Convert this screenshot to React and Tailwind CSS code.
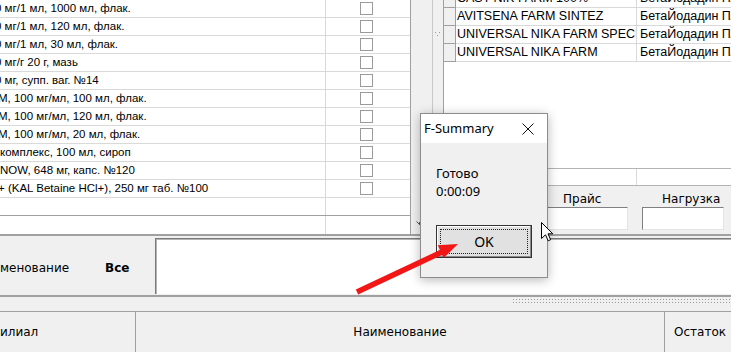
const leftRows = [
  { t: "0 мг/1 мл, 1000 мл, флак.", ml: "-ml-[5px]" },
  { t: "0 мг/1 мл, 120 мл, флак.", ml: "-ml-[5px]" },
  { t: "0 мг/1 мл, 30 мл, флак.", ml: "-ml-[5px]" },
  { t: "0 мг/г 20 г, мазь", ml: "-ml-[5px]" },
  { t: "0 мг, супп. ваг. №14", ml: "-ml-[5px]" },
  { t: "М, 100 мг/мл, 100 мл, флак.", ml: "-ml-[2px]" },
  { t: "М, 100 мг/мл, 120 мл, флак.", ml: "-ml-[2px]" },
  { t: "М, 100 мг/мл, 20 мл, флак.", ml: "-ml-[2px]" },
  { t: "комплекс, 100 мл, сироп", ml: "ml-0" },
  { t: "NOW, 648 мг, капс. №120", ml: "ml-0" },
  { t: "+ (KAL Betaine HCl+), 250 мг таб. №100", ml: "-ml-[2px]" },
];

const rightRows = [
  ["CAST NIK FARM 100%", "БетаЙодадин Плюс"],
  ["AVITSENA FARM SINTEZ", "БетаЙодадин Плюс"],
  ["UNIVERSAL NIKA FARM SPECIAL", "БетаЙодадин Плюс"],
  ["UNIVERSAL NIKA FARM", "БетаЙодадин Плюс"],
];

const sans = "font-['Liberation_Sans',Arial,sans-serif]";
const deja = "font-['DejaVu_Sans',sans-serif]";

function Checkbox() {
  return <span className="block w-[13px] h-[13px] border border-[#9a9a9a] bg-white" />;
}

function LeftGrid() {
  return (
    <div className={`w-[411px] shrink-0 flex flex-col bg-white border-r border-[#a0a0a0] text-[11.5px] ${sans}`}>
      {leftRows.map((r, i) => (
        <div key={i} className="flex h-[18px] border-b border-[#d9d9d9]">
          <div className="w-[326px] shrink-0 border-r border-[#d9d9d9] overflow-hidden flex items-center whitespace-nowrap">
            <span className={r.ml}>{r.t}</span>
          </div>
          <div className="flex-1 flex items-center pl-[34px]">
            <Checkbox />
          </div>
        </div>
      ))}
      <div className="flex h-[18px] border-b border-[#a0a0a0]">
        <div className="w-[326px] border-r border-[#d9d9d9]" />
      </div>
      <div className="flex flex-1">
        <div className="w-[326px] border-r border-[#d9d9d9]" />
      </div>
    </div>
  );
}

function Splitter() {
  return (
    <div className="flex shrink-0">
      <div className="w-[22px] border-r border-[#c8c8c8] flex flex-col">
        <svg className="mt-auto mb-[8px] ml-[5px]" width="5" height="5" viewBox="0 0 5 5">
          <path d="M0.5 0.5 L3.5 3.5 M3.5 1 L3.5 4" stroke="#555" strokeWidth="1" />
        </svg>
      </div>
      <div className="w-[10px] pt-[31px] pl-[1px]">
        <svg width="8" height="6" viewBox="0 0 8 6">
          <rect x="1" y="1" width="1" height="1" fill="#9a9a9a" />
          <rect x="5" y="1" width="1" height="1" fill="#9a9a9a" />
          <rect x="3" y="4" width="1" height="1" fill="#9a9a9a" />
        </svg>
      </div>
    </div>
  );
}

function RightPanel() {
  return (
    <div className="flex-1 min-w-0 flex flex-col border-l border-[#a0a0a0]">
      <div className="h-[186px] bg-white flex flex-col">
        <div className="h-[62px] overflow-hidden">
          <div className={`-mt-[10px] text-[12.5px] text-black ${sans}`}>
            {rightRows.map((r, i) => (
              <div key={i} className="flex h-[18px]">
                <div className="w-[12px] shrink-0 bg-[#f0f0f0] border-r border-b border-[#a0a0a0]" />
                <div className="w-[181px] shrink-0 border-r border-b border-[#d9d9d9] overflow-hidden whitespace-nowrap pl-[1px] leading-[17px]">
                  {r[0]}
                </div>
                <div className="flex-1 min-w-0 border-b border-[#d9d9d9] overflow-hidden whitespace-nowrap pl-[3px] leading-[17px]">
                  {r[1]}
                </div>
              </div>
            ))}
          </div>
        </div>
        <div className="flex-1" />
        <div className="flex h-[18px] border-t border-b border-[#b4b4b4]">
          <div className="w-[193px] border-r border-[#d9d9d9]" />
        </div>
      </div>
      <div className={`flex-1 bg-[#f0f0f0] flex pt-[6px] text-[12px] text-black ${deja}`}>
        <div className="ml-[103px] w-[81px] shrink-0 flex flex-col">
          <div className="h-[15px] leading-[15px] pl-[16px]">Прайс</div>
          <div className="h-[23px] bg-white border border-t-[#808080] border-l-[#808080] border-r-[#e3e3e3] border-b-[#e3e3e3]" />
        </div>
        <div className="ml-[14px] w-[82px] shrink-0 flex flex-col">
          <div className="h-[15px] leading-[15px] pl-[20px] whitespace-nowrap">Нагрузка</div>
          <div className="h-[23px] bg-white border border-t-[#808080] border-l-[#808080] border-r-[#e3e3e3] border-b-[#e3e3e3]" />
        </div>
      </div>
    </div>
  );
}

function Dialog() {
  return (
    <div className="absolute left-[420px] top-[113px] w-[128px] h-[165px] border border-[#8c8c8c] bg-[#f0f0f0] shadow-[0_2px_10px_rgba(0,0,0,0.28)] font-['Noto_Sans',sans-serif] text-[13px] text-black flex flex-col">
      <div className="h-[29px] bg-white flex items-center pl-[3px]">
        <span>F-Summary</span>
        <svg className="ml-auto mr-[13px]" width="12" height="12" viewBox="0 0 12 12">
          <path d="M0.5 0.5 L11.5 11.5 M11.5 0.5 L0.5 11.5" stroke="#111" strokeWidth="1" />
        </svg>
      </div>
      <div className="pl-[15px] mt-[21px] leading-[18px]">
        <div>Готово</div>
        <div>0:00:09</div>
      </div>
      <div className="pl-[15px] mt-[25px]">
        <div className="w-[96px] h-[33px] border border-[#333] bg-[#e1e1e1] p-[3px] shadow-[inset_-1px_-1px_0_#8a8a8a,inset_1px_1px_0_#fff]">
          <div className="h-full border border-dotted border-[#222] flex items-center justify-center text-[14px]">OK</div>
        </div>
      </div>
    </div>
  );
}

export default function App() {
  return (
    <div className="relative w-[731px] h-[352px] overflow-hidden bg-[#f0f0f0] text-black">
      <div className="flex h-[234px]">
        <LeftGrid />
        <Splitter />
        <RightPanel />
      </div>
      <div className="h-[2px] bg-[#a0a0a0]" />
      <div className={`flex h-[59px] pt-[2px] text-[12px] ${deja}`}>
        <div className="w-[105px] shrink-0 flex items-center pt-[3px] whitespace-nowrap">менование</div>
        <div className="w-[50px] shrink-0 flex items-center pt-[3px] font-bold">Все</div>
        <div className="flex-1 h-[56px] bg-white border-l border-t border-[#7a7a7a] shadow-[inset_1px_1px_0_#b4b4b4]" />
      </div>
      <div className="h-[2px] bg-[#a0a0a0]" />
      <div className="h-[14px] flex">
        <div className="ml-[512px] mt-[1px] flex-1 h-[6px] bg-[radial-gradient(#9a9a9a_0.8px,transparent_1px)] bg-[length:3px_3px]" />
      </div>
      <div className={`flex h-[41px] border-t border-[#a0a0a0] text-[12px] ${deja}`}>
        <div className="w-[136px] shrink-0 border-r border-[#a0a0a0] flex items-center whitespace-nowrap">илиал</div>
        <div className="w-[529px] shrink-0 border-r border-[#a0a0a0] flex items-center justify-center">Наименование</div>
        <div className="flex-1 flex items-center pl-[9px]">Остаток</div>
      </div>

      <Dialog />

      <svg className="absolute left-[541px] top-[222px]" width="13" height="20" viewBox="0 0 13 20">
        <path d="M0.5 0.5 L0.5 16.5 L4.5 12.8 L7.2 18.8 L9.6 17.7 L7 11.8 L11.8 11.8 Z" fill="#fff" stroke="#000" strokeWidth="1" />
      </svg>

      <svg className="absolute left-0 top-0 pointer-events-none" width="731" height="352" viewBox="0 0 731 352">
        <line x1="357" y1="292" x2="443" y2="251.5" stroke="#f21616" strokeWidth="5.5" />
        <polygon points="458,244 437.8,245.3 443.6,258.1" fill="#f21616" />
      </svg>
    </div>
  );
}
